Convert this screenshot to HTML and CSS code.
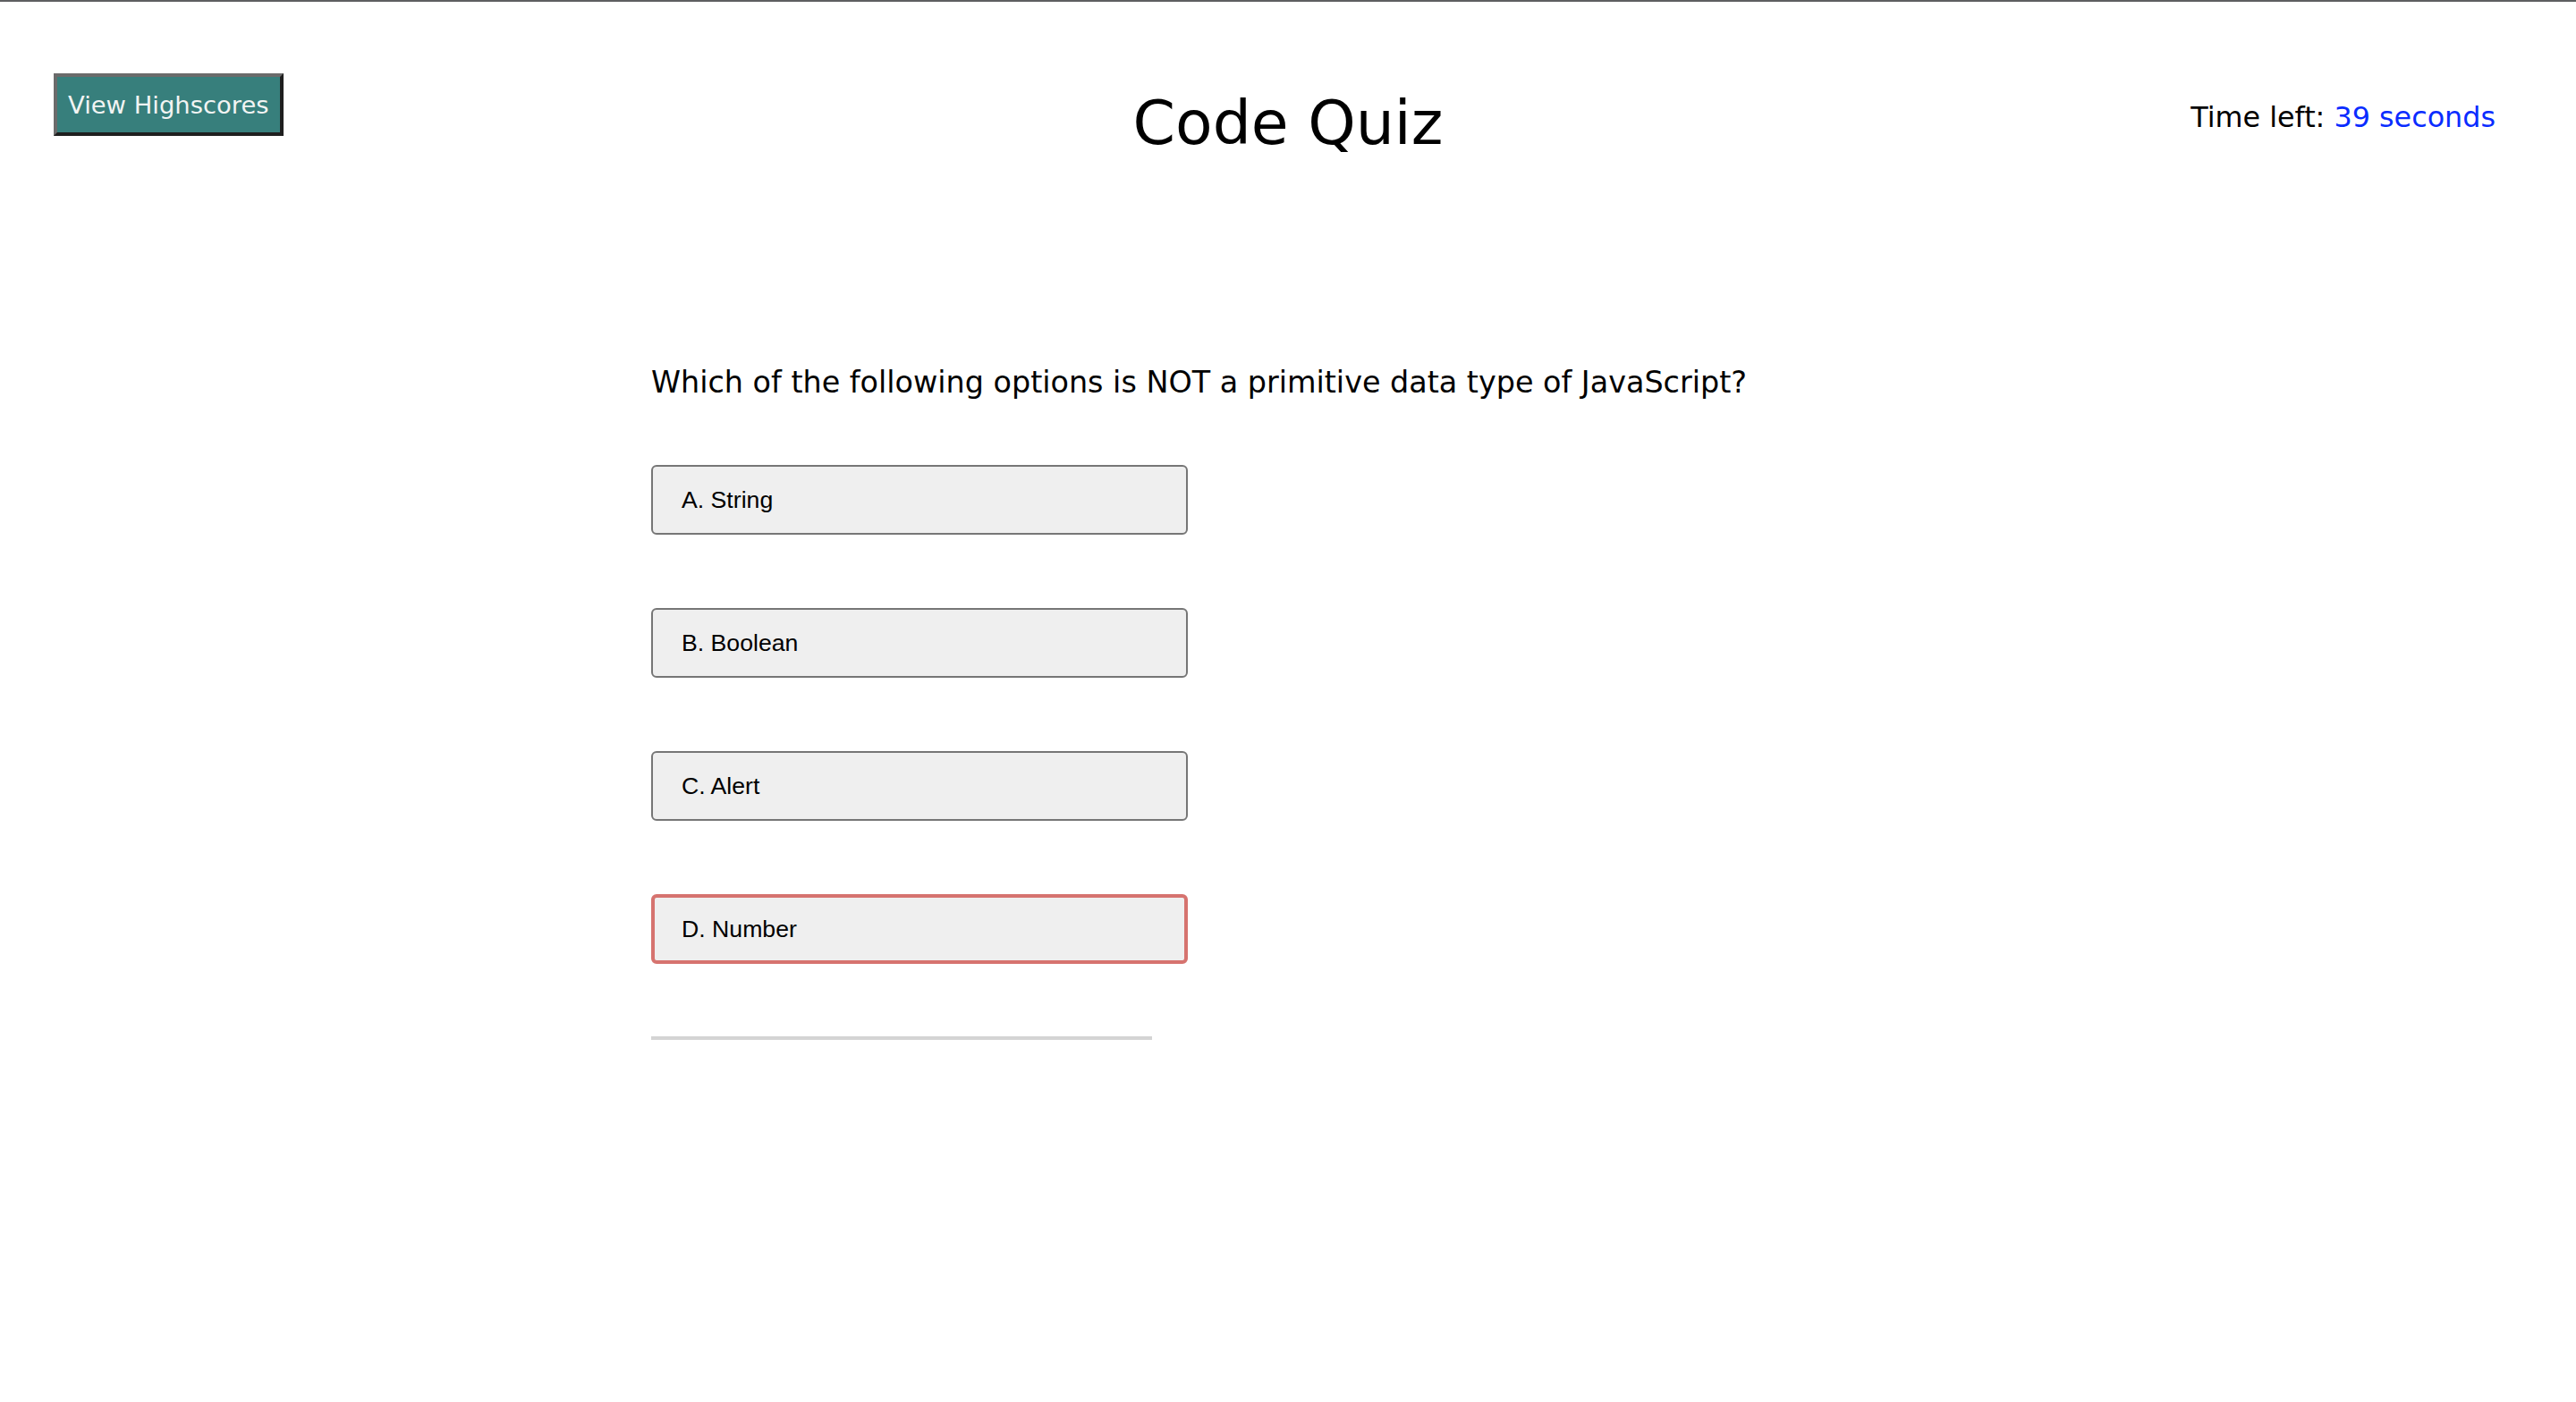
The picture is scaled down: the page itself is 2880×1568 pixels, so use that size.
FILE: index.html
```html
<!DOCTYPE html>
<html lang="en">
<head>
<meta charset="utf-8">
<title>Code Quiz</title>
<link rel="stylesheet" href="styles.css">
</head>
<body>
<div class="top-line"></div>
<header class="header">
  <button class="highscores-btn" type="button">View Highscores</button>
  <h1 class="title">Code Quiz</h1>
  <div class="timer">Time left: <span class="timer-value">39 seconds</span></div>
</header>
<main class="quiz">
  <p class="question">Which of the following options is NOT a primitive data type of JavaScript?</p>
  <div class="choices">
    <button class="choice" type="button">A. String</button>
    <button class="choice" type="button">B. Boolean</button>
    <button class="choice" type="button">C. Alert</button>
    <button class="choice choice-wrong" type="button">D. Number</button>
  </div>
  <div class="divider"></div>
</main>
</body>
</html>
```
FILE: styles.css
```css
html, body {
  margin: 0;
  padding: 0;
  background: #ffffff;
}

body {
  font-family: "DejaVu Sans", "Noto Sans", sans-serif;
  color: #000000;
}

.top-line {
  height: 2px;
  background: #5e5f61;
}

.header {
  display: grid;
  grid-template-columns: 1fr auto 1fr;
  align-items: start;
  padding: 80px 60px 0 60px;
}

.highscores-btn {
  justify-self: start;
  display: flex;
  align-items: center;
  height: 70px;
  margin: 0;
  padding: 0 12px;
  box-sizing: border-box;
  font-family: "DejaVu Sans", "Noto Sans", sans-serif;
  font-size: 27.4px;
  line-height: 27px;
  color: #f2f4f3;
  background: #377f7c;
  border-style: solid;
  border-width: 4px;
  border-color: #6b6b6b #1f1f1f #1f1f1f #6b6b6b;
  cursor: pointer;
}

.title {
  margin: 22px 0 0 0;
  font-size: 68px;
  line-height: 68px;
  font-weight: normal;
  white-space: nowrap;
}

.timer {
  justify-self: end;
  margin: 33px 30px 0 0;
  font-size: 31.8px;
  line-height: 32px;
  white-space: nowrap;
}

.timer-value {
  color: #0a2cff;
}

.quiz {
  max-width: 1424px;
  margin: 0 auto;
  padding-top: 239px;
}

.question {
  margin: 0;
  font-size: 33.4px;
  line-height: 33px;
  white-space: nowrap;
}

.choices {
  display: flex;
  flex-direction: column;
  align-items: flex-start;
  gap: 82px;
  margin-top: 76px;
}

.choice {
  display: flex;
  align-items: center;
  width: 600px;
  height: 78px;
  margin: 0;
  padding: 0 0 0 32px;
  box-sizing: border-box;
  font-family: "Liberation Sans", Arial, sans-serif;
  font-size: 26.67px;
  color: #000000;
  text-align: left;
  background: #efefef;
  border: 2px solid #767676;
  border-radius: 6px;
  cursor: pointer;
}

.choice-wrong {
  padding-left: 30px;
  border: 4px solid #d6736f;
}

.divider {
  width: 560px;
  height: 4px;
  margin-top: 81px;
  background: #d4d4d4;
}
```
